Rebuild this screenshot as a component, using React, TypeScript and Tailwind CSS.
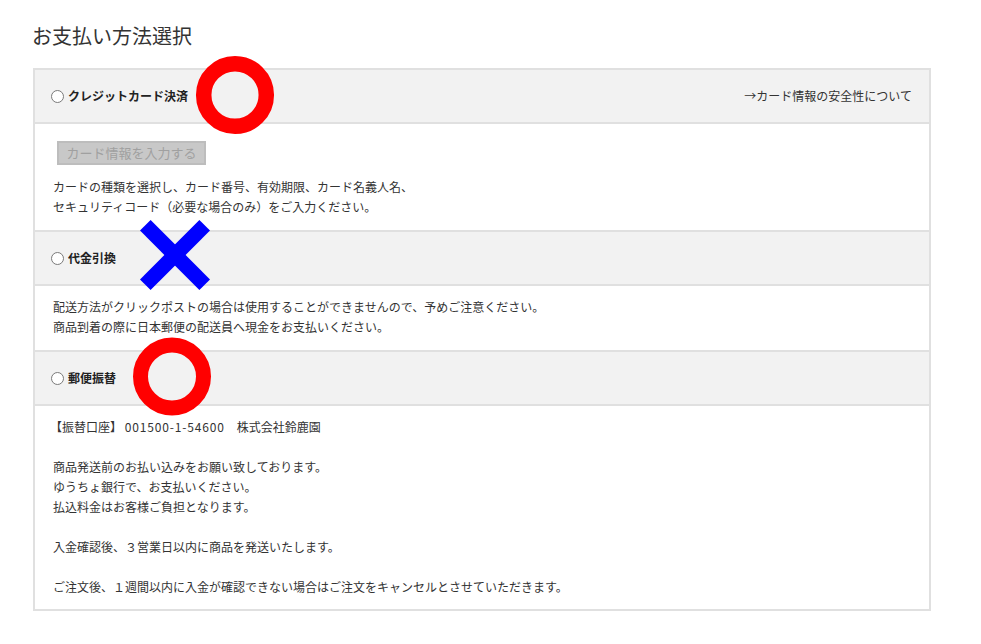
import React from "react";

const font = {
  fontFamily: '"Noto Sans CJK JP", "Noto Sans", sans-serif',
};

function Radio() {
  return (
    <span className="inline-block w-[13px] h-[13px] rounded-full border border-[#7a7a7a] bg-white shrink-0" />
  );
}

function MethodHeader({ label, right }: { label: string; right?: string }) {
  return (
    <div className="h-[54px] bg-[#f2f2f2] border-b-2 border-[#e0e0e0] flex items-center justify-between pl-[16px] pr-[17px]">
      <label className="flex items-center gap-[4px] text-[12px] font-bold text-[#222]">
        <Radio />
        {label}
      </label>
      {right && <a className="text-[12px] text-[#333]">{right}</a>}
    </div>
  );
}

export default function App() {
  return (
    <div className="relative w-[981px] h-[644px] bg-white overflow-hidden" style={font}>
      <div className="pl-[33px] pt-[22px]">
        <h1 className="text-[20px] leading-[28px] text-[#333] font-normal mb-[18px] -ml-[1px]">
          お支払い方法選択
        </h1>

        <div className="w-[898px] border-2 border-[#e0e0e0] text-[12px] leading-[20px] text-[#333]">
          {/* クレジットカード */}
          <MethodHeader label="クレジットカード決済" right="→カード情報の安全性について" />
          <div className="border-b-2 border-[#e0e0e0] pl-[18px] pt-[17px] pb-[13px]">
            <button
              disabled
              className="ml-[4px] w-[149px] h-[24px] bg-[#c8c8c8] border-2 border-[#bdbdbd] text-[13px] leading-[20px] text-[#a0a0a0] mb-[12px] flex items-center justify-center"
            >
              カード情報を入力する
            </button>
            <p>
              カードの種類を選択し、カード番号、有効期限、カード名義人名、
              <br />
              セキュリティコード（必要な場合のみ）をご入力ください。
            </p>
          </div>

          {/* 代金引換 */}
          <MethodHeader label="代金引換" />
          <div className="border-b-2 border-[#e0e0e0] pl-[18px] pt-[11px] pb-[13px]">
            <p>
              配送方法がクリックポストの場合は使用することができませんので、予めご注意ください。
              <br />
              商品到着の際に日本郵便の配送員へ現金をお支払いください。
            </p>
          </div>

          {/* 郵便振替 */}
          <MethodHeader label="郵便振替" />
          <div className="pl-[18px] pt-[11px] pb-[12px]">
            <p className="-ml-[3px]">
              【振替口座】 <span className="tracking-[0.85px]">001500-1-54600</span>　株式会社鈴鹿園
            </p>
            <p>&nbsp;</p>
            <p>
              商品発送前のお払い込みをお願い致しております。
              <br />
              ゆうちょ銀行で、お支払いください。
              <br />
              払込料金はお客様ご負担となります。
            </p>
            <p>&nbsp;</p>
            <p>入金確認後、３営業日以内に商品を発送いたします。</p>
            <p>&nbsp;</p>
            <p>ご注文後、１週間以内に入金が確認できない場合はご注文をキャンセルとさせていただきます。</p>
          </div>
        </div>
      </div>

      {/* annotations */}
      <svg className="absolute left-0 top-0 pointer-events-none" width="981" height="644">
        <circle cx="235" cy="95" r="31.3" fill="none" stroke="#ff0000" strokeWidth="15.5" />
        <line x1="145.3" y1="225.3" x2="204.7" y2="284.7" stroke="#0000ff" strokeWidth="15" />
        <line x1="204.7" y1="225.3" x2="145.3" y2="284.7" stroke="#0000ff" strokeWidth="15" />
        <circle cx="172" cy="376.5" r="31.5" fill="none" stroke="#ff0000" strokeWidth="15" />
      </svg>
    </div>
  );
}
